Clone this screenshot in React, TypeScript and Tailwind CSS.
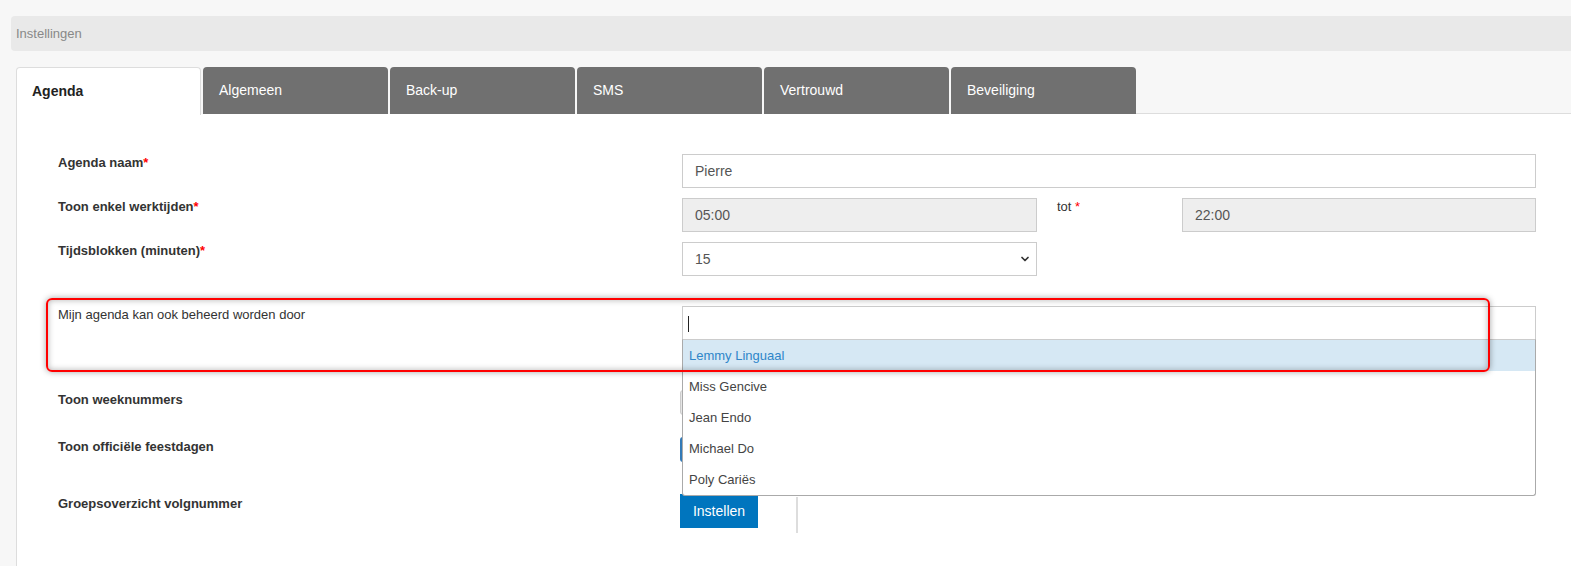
import { ChevronDown } from 'lucide-react'

const tabs = ['Agenda', 'Algemeen', 'Back-up', 'SMS', 'Vertrouwd', 'Beveiliging']
const users = ['Lemmy Linguaal', 'Miss Gencive', 'Jean Endo', 'Michael Do', 'Poly Cariës']

function Req() {
  return <span className="text-[#f00]">*</span>
}

function App() {
  return (
    <div className="flex min-h-screen flex-col bg-[#f7f7f7] pt-4 font-['Liberation_Sans',Arial,sans-serif] text-[#333]">
      <div className="ml-[11px] flex h-[35px] items-center rounded-l-[4px] bg-[#e9e9e9] pl-[5px] text-[13px] text-[#888]">
        Instellingen
      </div>

      <div className="mt-4 ml-4 flex h-[47px]">
        {tabs.map((t, i) =>
          i === 0 ? (
            <div
              key={t}
              className="relative z-10 flex h-[48px] w-[185px] items-center rounded-t-[4px] border border-b-0 border-[#ddd] bg-white pl-[15px] text-[14px] font-bold text-[#222]"
            >
              {t}
            </div>
          ) : (
            <div
              key={t}
              className="ml-[2px] flex h-[47px] w-[185px] items-center rounded-t-[4px] bg-[#707070] pl-4 text-[14px] text-white"
            >
              {t}
            </div>
          ),
        )}
        <div className="h-[47px] flex-1 border-b border-[#ddd]" />
      </div>

      <div className="ml-4 flex-1 border-l border-[#ddd] bg-white pt-[40px] pr-[35px] pl-[41px] text-[13px]">
        {/* Agenda naam */}
        <div className="mb-[10px] flex">
          <div className="w-[624px] leading-[18px] font-bold">
            Agenda naam<Req />
          </div>
          <div className="flex h-[34px] flex-1 items-center border border-[#ccc] px-3 text-[14px] text-[#555]">
            Pierre
          </div>
        </div>

        {/* Werktijden */}
        <div className="mb-[10px] flex">
          <div className="w-[624px] leading-[18px] font-bold">
            Toon enkel werktijden<Req />
          </div>
          <div className="flex flex-1">
            <div className="flex h-[34px] w-[355px] items-center border border-[#ccc] bg-[#eee] px-3 text-[14px] text-[#555]">
              05:00
            </div>
            <div className="w-[145px] pl-5 leading-[18px]">
              tot <Req />
            </div>
            <div className="flex h-[34px] flex-1 items-center border border-[#ccc] bg-[#eee] px-3 text-[14px] text-[#555]">
              22:00
            </div>
          </div>
        </div>

        {/* Tijdsblokken */}
        <div className="mb-[30px] flex">
          <div className="w-[624px] leading-[18px] font-bold">
            Tijdsblokken (minuten)<Req />
          </div>
          <div className="flex h-[34px] w-[355px] items-center justify-between border border-[#ccc] pr-[5px] pl-3 text-[14px] text-[#555]">
            15
            <ChevronDown size={12} strokeWidth={3.5} className="text-[#333]" />
          </div>
        </div>

        {/* Beheerd door */}
        <div className="relative z-20 mb-[50px] flex">
          <div className="w-[624px] leading-[18px]">Mijn agenda kan ook beheerd worden door</div>
          <div className="relative h-[34px] flex-1 border border-[#ccc] bg-white">
            <div className="mt-[9px] ml-[5px] h-[16px] w-px bg-[#222]" />
            <div className="absolute top-[32px] -right-px -left-px overflow-hidden rounded-b-[3px] border border-t-[#ccc] border-r-[#aaa] border-b-[#aaa] border-l-[#aaa] bg-white text-[13px] text-[#444]">
              {users.map((u, i) => (
                <div
                  key={u}
                  className={
                    i === 0
                      ? 'flex h-[31px] items-center bg-[#d6e8f4] pl-[6px] text-[#2f86c9]'
                      : 'flex h-[31px] items-center pl-[6px]'
                  }
                >
                  {u}
                </div>
              ))}
            </div>
          </div>
          <div className="pointer-events-none absolute -top-2 -left-3 z-30 h-[74px] w-[1444px] rounded-[6px] border-2 border-[#f00] shadow-[0_0_6px_rgba(0,0,0,0.35),inset_0_0_6px_rgba(0,0,0,0.3)]" />
        </div>

        {/* Weeknummers */}
        <div className="mb-[22px] flex">
          <div className="w-[624px] pt-px leading-[18px] font-bold">Toon weeknummers</div>
          <div className="-ml-[2px] h-[25px] w-[60px] rounded-[3px] border border-[#ccc] bg-[#e6e6e6]" />
        </div>

        {/* Feestdagen */}
        <div className="mb-[32px] flex">
          <div className="w-[624px] pt-px leading-[18px] font-bold">Toon officiële feestdagen</div>
          <div className="-ml-[2px] h-[25px] w-[60px] rounded-[3px] bg-[#337ab7]" />
        </div>

        {/* Groepsoverzicht */}
        <div className="flex">
          <div className="w-[624px] pt-px leading-[18px] font-bold">Groepsoverzicht volgnummer</div>
          <button className="-ml-[2px] h-[34px] w-[78px] bg-[#0075be] text-[14px] text-white">
            Instellen
          </button>
          <div className="mt-[3px] ml-[38px] h-[36px] w-[2px] bg-[#ddd]" />
        </div>
      </div>
    </div>
  )
}

export default App
